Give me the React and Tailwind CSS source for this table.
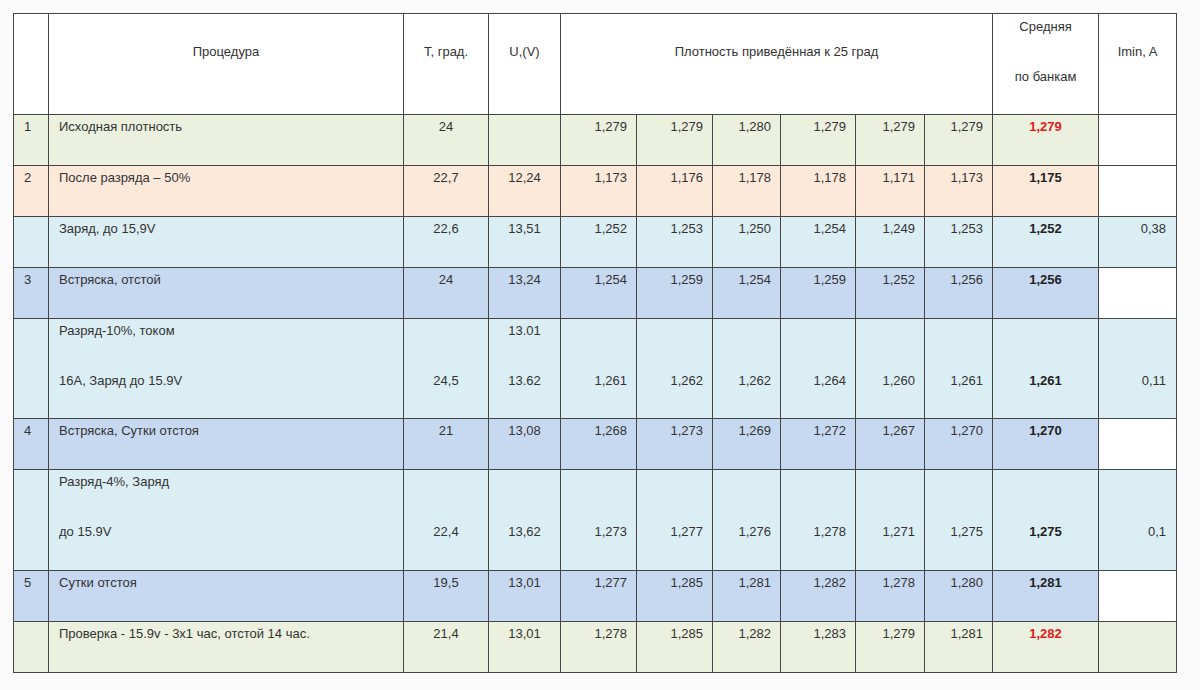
import React from "react";

const GREEN = "bg-[#ebf1de]";
const ORANGE = "bg-[#fde9d9]";
const LBLUE = "bg-[#dbeef4]";
const BLUE = "bg-[#c6d9f1]";
const WHITE = "bg-white";

const rows = [
  { c: GREEN, n: "1", p: ["Исходная плотность"], t: ["24"], u: [""], d: ["1,279", "1,279", "1,280", "1,279", "1,279", "1,279"], a: ["1,279"], red: true, i: [""], ic: WHITE },
  { c: ORANGE, n: "2", p: ["После разряда – 50%"], t: ["22,7"], u: ["12,24"], d: ["1,173", "1,176", "1,178", "1,178", "1,171", "1,173"], a: ["1,175"], i: [""], ic: WHITE },
  { c: LBLUE, n: "", p: ["Заряд, до 15,9V"], t: ["22,6"], u: ["13,51"], d: ["1,252", "1,253", "1,250", "1,254", "1,249", "1,253"], a: ["1,252"], i: ["0,38"], ic: LBLUE },
  { c: BLUE, n: "3", p: ["Встряска, отстой"], t: ["24"], u: ["13,24"], d: ["1,254", "1,259", "1,254", "1,259", "1,252", "1,256"], a: ["1,256"], i: [""], ic: WHITE },
  { c: LBLUE, n: "", p: ["Разряд-10%, током", "16А, Заряд до 15.9V"], t: ["", "24,5"], u: ["13.01", "13.62"], d: ["1,261", "1,262", "1,262", "1,264", "1,260", "1,261"], short: true, a: ["", "1,261"], i: ["", "0,11"], ic: LBLUE },
  { c: BLUE, n: "4", p: ["Встряска, Сутки отстоя"], t: ["21"], u: ["13,08"], d: ["1,268", "1,273", "1,269", "1,272", "1,267", "1,270"], a: ["1,270"], i: [""], ic: WHITE },
  { c: LBLUE, n: "", p: ["Разряд-4%, Заряд", "до 15.9V"], t: ["", "22,4"], u: ["", "13,62"], d: ["1,273", "1,277", "1,276", "1,278", "1,271", "1,275"], a: ["", "1,275"], i: ["", "0,1"], ic: LBLUE },
  { c: BLUE, n: "5", p: ["Сутки отстоя"], t: ["19,5"], u: ["13,01"], d: ["1,277", "1,285", "1,281", "1,282", "1,278", "1,280"], a: ["1,281"], i: [""], ic: WHITE },
  { c: GREEN, n: "", p: ["Проверка - 15.9v - 3x1 час, отстой 14 час."], t: ["21,4"], u: ["13,01"], d: ["1,278", "1,285", "1,282", "1,283", "1,279", "1,281"], a: ["1,282"], red: true, i: [""], ic: GREEN },
];

function Lines({ lines, short, className = "" }) {
  return (
    <>
      {lines.map((l, k) => (
        <div
          key={k}
          className={
            (short && k === lines.length - 1 ? "h-[49px]" : "h-[50px]") +
            " pt-[4px] leading-[16px] whitespace-nowrap " +
            className
          }
        >
          {l}
        </div>
      ))}
    </>
  );
}

const td = "border border-[#454545] align-top p-0 px-[10px]";
const th = "border border-[#454545] align-top p-0 px-[10px] font-normal bg-white";

export default function App() {
  return (
    <div
      className="w-[1200px] h-[690px] bg-[#fbfbfb] pt-[13px] pl-[13px] text-[13px] text-[#333]"
      style={{ fontFamily: '"Liberation Sans", Arial, sans-serif' }}
    >
      <table className="table-fixed border-collapse w-[1163px]">
        <colgroup>
          <col className="w-[35px]" />
          <col className="w-[355px]" />
          <col className="w-[85px]" />
          <col className="w-[72px]" />
          <col className="w-[76px]" />
          <col className="w-[76px]" />
          <col className="w-[68px]" />
          <col className="w-[75px]" />
          <col className="w-[69px]" />
          <col className="w-[68px]" />
          <col className="w-[106px]" />
          <col className="w-[78px]" />
        </colgroup>
        <thead>
          <tr>
            <th className={th}>
              <div className="h-[100px]" />
            </th>
            <th className={th + " text-center"}>
              <div className="h-[100px] pt-[30px] leading-[16px]">Процедура</div>
            </th>
            <th className={th + " text-center"}>
              <div className="h-[100px] pt-[30px] leading-[16px]">T, град.</div>
            </th>
            <th className={th + " text-center"}>
              <div className="h-[100px] pt-[30px] leading-[16px]">U,(V)</div>
            </th>
            <th colSpan={6} className={th + " text-center"}>
              <div className="h-[100px] pt-[30px] leading-[16px]">Плотность приведённая к 25 град</div>
            </th>
            <th className={th + " text-center"}>
              <div className="h-[50px] pt-[5px] leading-[16px]">Средняя</div>
              <div className="h-[50px] pt-[5px] leading-[16px]">по банкам</div>
            </th>
            <th className={th + " text-center"}>
              <div className="h-[100px] pt-[30px] leading-[16px]">Imin, A</div>
            </th>
          </tr>
        </thead>
        <tbody>
          {rows.map((r, idx) => {
            const two = r.p.length > 1;
            return (
              <tr key={idx}>
                <td className={td + " " + r.c}>
                  <Lines lines={two ? [r.n, ""] : [r.n]} short={r.short} />
                </td>
                <td className={td + " " + r.c}>
                  <Lines lines={r.p} short={r.short} />
                </td>
                <td className={td + " text-center " + r.c}>
                  <Lines lines={r.t} short={r.short} />
                </td>
                <td className={td + " text-center " + r.c}>
                  <Lines lines={r.u} short={r.short} />
                </td>
                {r.d.map((v, k) => (
                  <td key={k} className={td + " text-right pr-[9px] " + r.c}>
                    <Lines lines={two ? ["", v] : [v]} short={r.short} />
                  </td>
                ))}
                <td className={td + " text-center " + r.c}>
                  <Lines
                    lines={r.a}
                    short={r.short}
                    className={"font-bold " + (r.red ? "text-[#e01b1b]" : "text-[#222]")}
                  />
                </td>
                <td className={td + " text-right " + r.ic}>
                  <Lines lines={r.i} short={r.short} />
                </td>
              </tr>
            );
          })}
        </tbody>
      </table>
    </div>
  );
}
